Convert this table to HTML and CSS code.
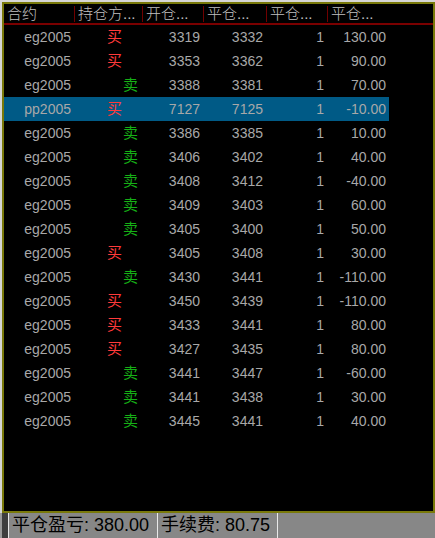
FILE: index.html
```html
<!DOCTYPE html>
<html lang="zh">
<head>
    <meta charset="UTF-8">
    <title>平仓明细</title>
    <link rel="stylesheet" href="styles.css">
</head>
<body>
    <div class="panel">
        <div class="grid-head">
            <div class="hcell">合约</div>
            <div class="hcell sep">持仓方...</div>
            <div class="hcell sep">开仓...</div>
            <div class="hcell sep">平仓...</div>
            <div class="hcell sep">平仓...</div>
            <div class="hcell sep">平仓...</div>
        </div>

        <div class="row"><div class="c code">eg2005</div><div class="c buy">买</div><div class="c num">3319</div><div class="c num">3332</div><div class="c num">1</div><div class="c num">130.00</div></div>
        <div class="row"><div class="c code">eg2005</div><div class="c buy">买</div><div class="c num">3353</div><div class="c num">3362</div><div class="c num">1</div><div class="c num">90.00</div></div>
        <div class="row"><div class="c code">eg2005</div><div class="c sell">卖</div><div class="c num">3388</div><div class="c num">3381</div><div class="c num">1</div><div class="c num">70.00</div></div>
        <div class="row selected"><div class="c code">pp2005</div><div class="c buy">买</div><div class="c num">7127</div><div class="c num">7125</div><div class="c num">1</div><div class="c num">-10.00</div></div>
        <div class="row"><div class="c code">eg2005</div><div class="c sell">卖</div><div class="c num">3386</div><div class="c num">3385</div><div class="c num">1</div><div class="c num">10.00</div></div>
        <div class="row"><div class="c code">eg2005</div><div class="c sell">卖</div><div class="c num">3406</div><div class="c num">3402</div><div class="c num">1</div><div class="c num">40.00</div></div>
        <div class="row"><div class="c code">eg2005</div><div class="c sell">卖</div><div class="c num">3408</div><div class="c num">3412</div><div class="c num">1</div><div class="c num">-40.00</div></div>
        <div class="row"><div class="c code">eg2005</div><div class="c sell">卖</div><div class="c num">3409</div><div class="c num">3403</div><div class="c num">1</div><div class="c num">60.00</div></div>
        <div class="row"><div class="c code">eg2005</div><div class="c sell">卖</div><div class="c num">3405</div><div class="c num">3400</div><div class="c num">1</div><div class="c num">50.00</div></div>
        <div class="row"><div class="c code">eg2005</div><div class="c buy">买</div><div class="c num">3405</div><div class="c num">3408</div><div class="c num">1</div><div class="c num">30.00</div></div>
        <div class="row"><div class="c code">eg2005</div><div class="c sell">卖</div><div class="c num">3430</div><div class="c num">3441</div><div class="c num">1</div><div class="c num">-110.00</div></div>
        <div class="row"><div class="c code">eg2005</div><div class="c buy">买</div><div class="c num">3450</div><div class="c num">3439</div><div class="c num">1</div><div class="c num">-110.00</div></div>
        <div class="row"><div class="c code">eg2005</div><div class="c buy">买</div><div class="c num">3433</div><div class="c num">3441</div><div class="c num">1</div><div class="c num">80.00</div></div>
        <div class="row"><div class="c code">eg2005</div><div class="c buy">买</div><div class="c num">3427</div><div class="c num">3435</div><div class="c num">1</div><div class="c num">80.00</div></div>
        <div class="row"><div class="c code">eg2005</div><div class="c sell">卖</div><div class="c num">3441</div><div class="c num">3447</div><div class="c num">1</div><div class="c num">-60.00</div></div>
        <div class="row"><div class="c code">eg2005</div><div class="c sell">卖</div><div class="c num">3441</div><div class="c num">3438</div><div class="c num">1</div><div class="c num">30.00</div></div>
        <div class="row"><div class="c code">eg2005</div><div class="c sell">卖</div><div class="c num">3445</div><div class="c num">3441</div><div class="c num">1</div><div class="c num">40.00</div></div>
    </div>

    <div class="status-bar">
        <div class="status-edge"></div>
        <div class="status-cell profit">平仓盈亏: 380.00</div>
        <div class="status-cell fee">手续费: 80.75</div>
        <div class="status-cell rest"></div>
    </div>
</body>
</html>
```

FILE: styles.css
```css
body {
    margin: 0;
    padding: 0;
    background-color: #d6d6d6;
    font-family: "Liberation Sans", "Noto Sans CJK SC", sans-serif;
    overflow: hidden;
}
.panel {
    box-sizing: border-box;
    width: 433px;
    height: 511px;
    margin: 2px 0 0 2px;
    border: 2px solid #79790a;
    background-color: #000;
}
.grid-head, .row {
    display: grid;
    grid-template-columns: 70px 68px 61px 63px 61px 62px;
}
.grid-head {
    height: 19px;
    border-bottom: 2px solid #7a0000;
}
.row {
    width: 385px;
    height: 24px;
}
.hcell {
    color: #c0c0c0;
    font-size: 15px;
    font-weight: 300;
    line-height: 19px;
    padding-left: 3px;
    white-space: nowrap;
    overflow: hidden;
}
.hcell.sep {
    border-left: 1px solid #700000;
    margin: 2px 0 1px;
    line-height: 16px;
}
.row.selected {
    background-color: #005a86;
}
.c {
    font-size: 14px;
    line-height: 24px;
    color: #a8a8a8;
    white-space: nowrap;
}
.code, .num {
    text-align: right;
    padding-right: 3px;
}
.buy, .sell {
    font-size: 15px;
}
.buy {
    color: #ff3a3a;
    padding-left: 33px;
}
.sell {
    color: #16b016;
    padding-left: 49px;
}
.status-bar {
    display: flex;
    height: 25px;
    background-color: #878787;
}
.status-edge {
    width: 8px;
    background-color: #3e3e3e;
    border-left: 2px solid #9a9a9a;
    box-sizing: border-box;
}
.status-cell {
    box-sizing: border-box;
    border-left: 1px solid #e8e8e8;
    padding-left: 3px;
    font-size: 18px;
    line-height: 25px;
    color: #000;
    white-space: nowrap;
}
.status-cell.profit {
    width: 149px;
}
.status-cell.fee {
    width: 120px;
}
.status-cell.rest {
    flex: 1;
}
```
